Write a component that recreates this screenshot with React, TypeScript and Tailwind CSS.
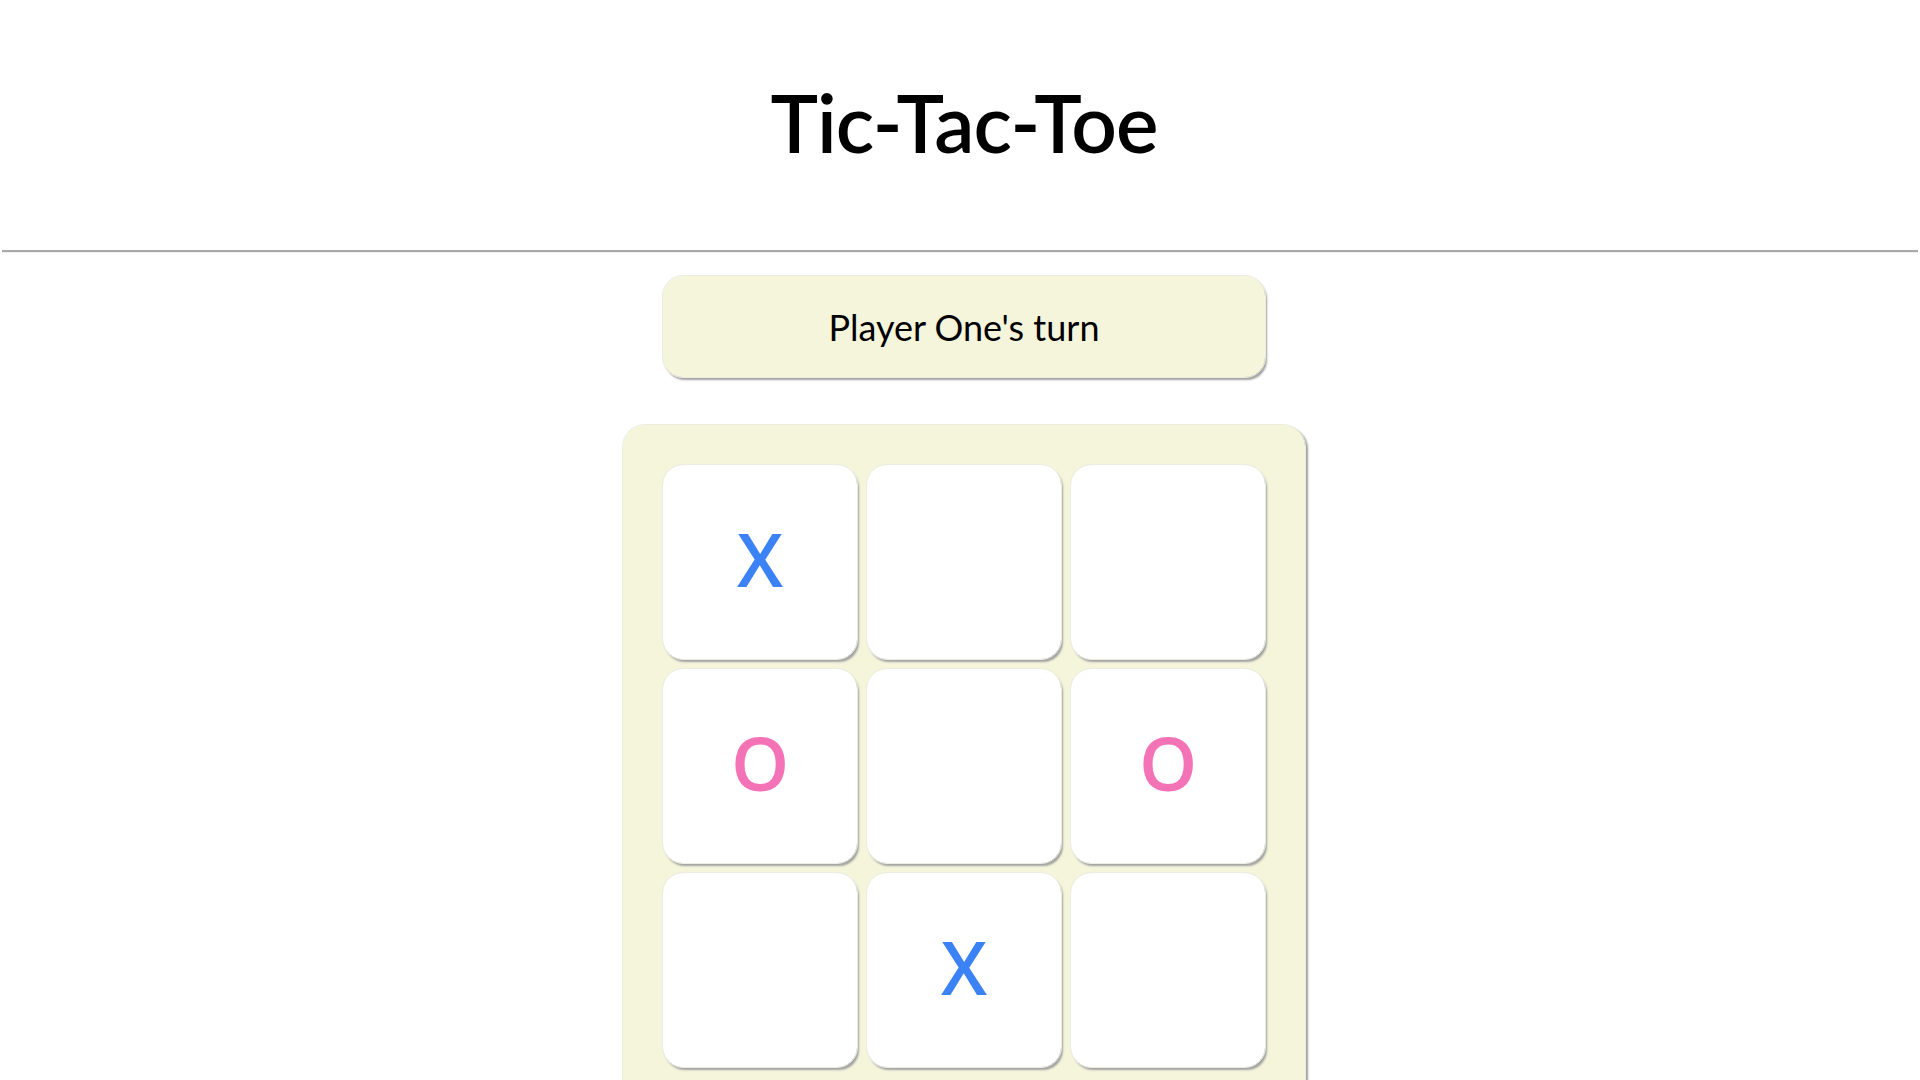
const board = ["X", "", "", "O", "", "O", "", "X", ""];

function Cell({ value }: { value: string }) {
  return (
    <div className="flex h-[194px] w-[194px] items-center justify-center rounded-[20px] bg-white shadow-[2px_3px_2px_#a3a3a3] outline outline-1 outline-[#ecece0]">
      {value && (
        <span
          className={
            value === "X"
              ? "mb-[6px] text-[74px] font-semibold leading-none text-[#3b82f6]"
              : "mb-[6px] text-[74px] font-semibold leading-none text-[#f472b6]"
          }
          style={{ fontFamily: "'Open Sans', sans-serif" }}
        >
          {value}
        </span>
      )}
    </div>
  );
}

export default function App() {
  return (
    <div className="min-h-screen overflow-hidden bg-white font-['Lato',sans-serif] text-black">
      {/* header */}
      <header className="flex h-[250px] items-center justify-center pb-[6px] pl-[8px]">
        <h1 className="text-[80px] font-semibold leading-none tracking-[-1px]">Tic-Tac-Toe</h1>
      </header>
      <div className="mx-[2px] h-[3px] border-t-2 border-[#a8a8a8] bg-[#eeeeee]" />

      <main className="flex flex-col items-center pl-[8px] pt-[23px]">
        {/* status */}
        <div className="flex h-[101px] w-[602px] items-center justify-center rounded-[20px] bg-[#f5f5dc] shadow-[2px_3px_2px_#a3a3a3] outline outline-1 outline-[#ecece0]">
          <p className="text-[36px] leading-none">Player One's turn</p>
        </div>

        {/* board */}
        <div className="mt-[48px] grid grid-cols-3 gap-[10px] rounded-[22px] bg-[#f5f5dc] p-[40px] shadow-[3px_2px_2px_#a0a0a0] outline outline-1 outline-[#ecece0]">
          {board.map((v, i) => (
            <Cell key={i} value={v} />
          ))}
        </div>
      </main>
    </div>
  );
}
